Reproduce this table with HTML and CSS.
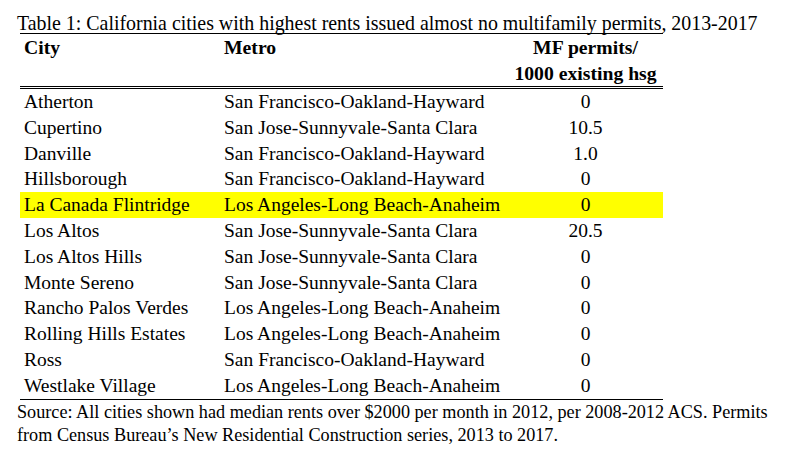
FILE: index.html
```html
<!DOCTYPE html>
<html>
<head>
<meta charset="utf-8">
<link rel="stylesheet" href="styles.css">
</head>
<body>
<div class="page">
  <div class="caption">Table 1: California cities with highest rents issued almost no multifamily permits, 2013-2017</div>
  <table class="rents">
    <thead>
      <tr>
        <th class="c-city">City</th>
        <th class="c-metro">Metro</th>
        <th class="c-mf">MF permits/<br>1000 existing hsg</th>
      </tr>
    </thead>
    <tbody>
      <tr><td>Atherton</td><td>San Francisco-Oakland-Hayward</td><td class="num">0</td></tr>
      <tr><td>Cupertino</td><td>San Jose-Sunnyvale-Santa Clara</td><td class="num">10.5</td></tr>
      <tr><td>Danville</td><td>San Francisco-Oakland-Hayward</td><td class="num">1.0</td></tr>
      <tr><td>Hillsborough</td><td>San Francisco-Oakland-Hayward</td><td class="num">0</td></tr>
      <tr class="hl"><td>La Canada Flintridge</td><td>Los Angeles-Long Beach-Anaheim</td><td class="num">0</td></tr>
      <tr><td>Los Altos</td><td>San Jose-Sunnyvale-Santa Clara</td><td class="num">20.5</td></tr>
      <tr><td>Los Altos Hills</td><td>San Jose-Sunnyvale-Santa Clara</td><td class="num">0</td></tr>
      <tr><td>Monte Sereno</td><td>San Jose-Sunnyvale-Santa Clara</td><td class="num">0</td></tr>
      <tr><td>Rancho Palos Verdes</td><td>Los Angeles-Long Beach-Anaheim</td><td class="num">0</td></tr>
      <tr><td>Rolling Hills Estates</td><td>Los Angeles-Long Beach-Anaheim</td><td class="num">0</td></tr>
      <tr><td>Ross</td><td>San Francisco-Oakland-Hayward</td><td class="num">0</td></tr>
      <tr><td>Westlake Village</td><td>Los Angeles-Long Beach-Anaheim</td><td class="num">0</td></tr>
    </tbody>
  </table>
  <div class="source">Source: All cities shown had median rents over $2000 per month in 2012, per 2008-2012 ACS. Permits<br>from Census Bureau’s New Residential Construction series, 2013 to 2017.</div>
</div>
</body>
</html>
```
FILE: styles.css
```css
html, body {
  margin: 0;
  padding: 0;
  background: #ffffff;
}
body {
  font-family: "Liberation Serif", "Times New Roman", serif;
  color: #000000;
}
.page {
  padding: 13px 0 0 17px;
}
.caption {
  font-size: 19.9px;
  line-height: 20px;
  white-space: nowrap;
}
.rents {
  border-collapse: collapse;
  margin-left: 3px;
  width: 643px;
  table-layout: fixed;
  font-size: 19.5px;
  border-top: 1px solid #000;
  border-bottom: 1px solid #000;
}
.rents th {
  font-weight: bold;
  font-size: 19.7px;
  text-align: left;
  vertical-align: top;
  line-height: 26px;
  padding: 0 0 0 4px;
  border-bottom: 3px double #000;
}
.rents th.c-city { width: 196px; }
.rents th.c-metro { width: 284px; }
.rents th.c-mf { text-align: center; padding-left: 0; }
.rents td {
  line-height: 25.8px;
  height: 25.8px;
  padding: 0 0 0 4px;
  white-space: nowrap;
}
.rents td.num {
  text-align: center;
  padding-left: 0;
}
.rents tr.hl td {
  background: #ffff00;
}
.source {
  font-size: 18.2px;
  line-height: 23.4px;
  padding-top: 1px;
  white-space: nowrap;
}
```
